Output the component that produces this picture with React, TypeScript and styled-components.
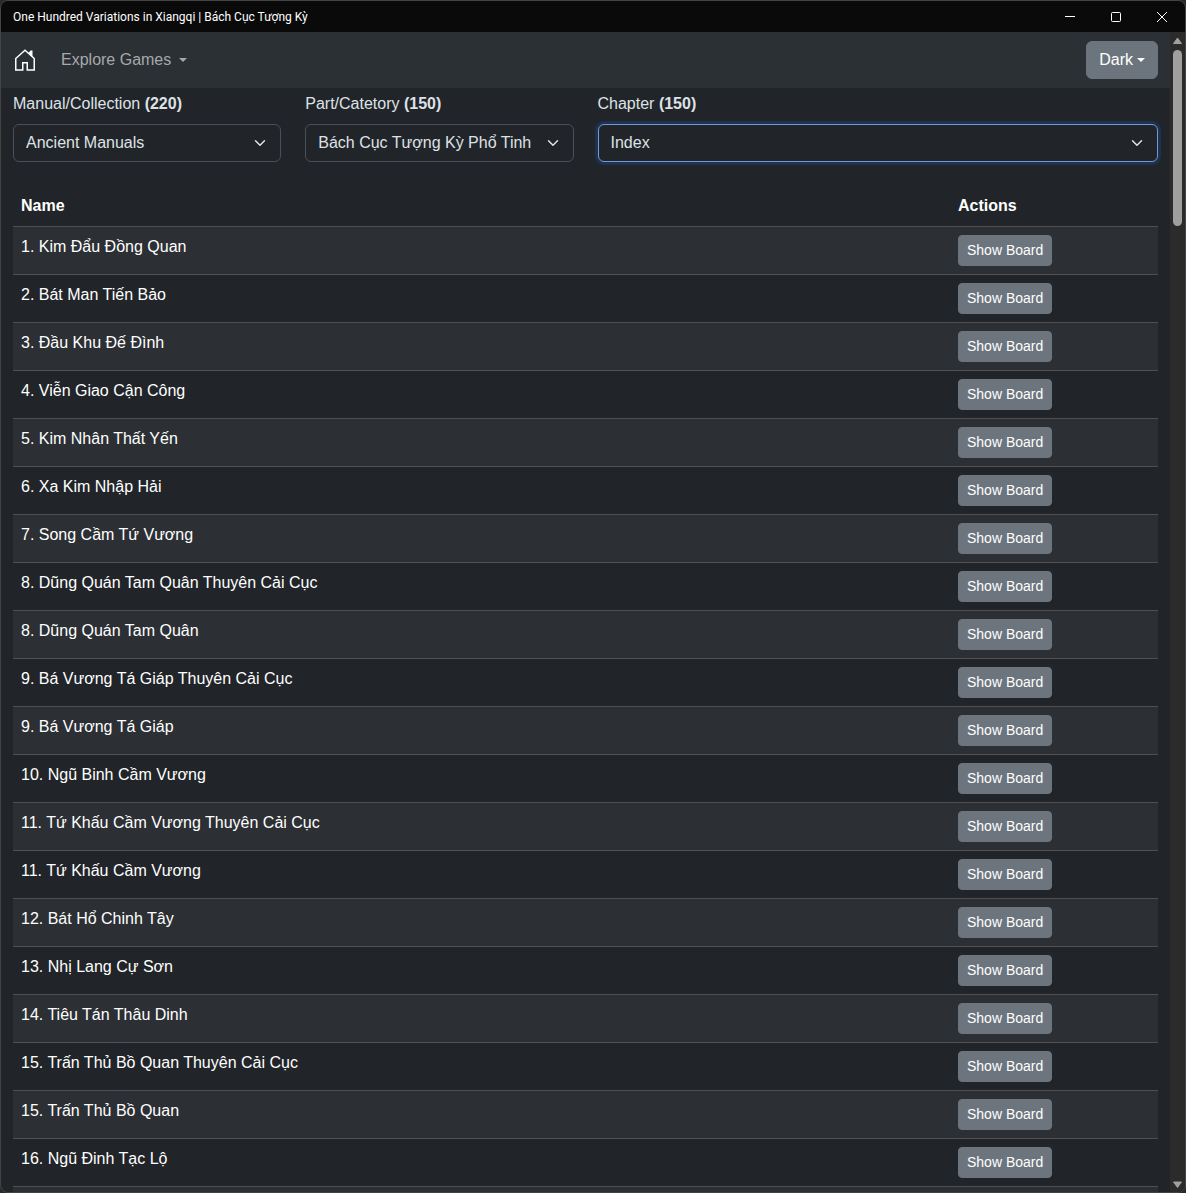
import React from "react";
import styled, { createGlobalStyle } from "styled-components";

const GlobalStyle = createGlobalStyle`
  *, *::before, *::after { box-sizing: border-box; }
  body {
    margin: 0;
    background: #2a2a2a;
    color: #dee2e6;
    font: 400 16px/24px "Liberation Sans", Arial, sans-serif;
  }
  button, select { font-family: inherit; }
`;

const Window = styled.div`
  display: flex;
  flex-direction: column;
  height: 100vh;
  border: 1px solid #444;
  border-radius: 8px;
  overflow: hidden;
  background: #212529;
`;

const TitleBar = styled.header`
  display: flex;
  flex: none;
  align-items: center;
  justify-content: space-between;
  height: 31px;
  padding-left: 12px;
  background: #0a0a0a;
  color: #fff;
`;

const Title = styled.span`
  font: 400 12px/16px Roboto, "Noto Sans", sans-serif;
`;

const WindowControls = styled.div`
  display: flex;
`;

const WindowButton = styled.button`
  display: grid;
  place-items: center;
  width: 46px;
  height: 31px;
  padding: 0;
  border: 0;
  background: none;
  color: #fff;
`;

const Viewport = styled.div`
  display: flex;
  flex: 1;
  min-height: 0;
`;

const Page = styled.div`
  flex: 1;
  min-width: 0;
  overflow: hidden;
`;

const Navbar = styled.nav`
  display: flex;
  align-items: center;
  height: 56px;
  padding: 0 12px;
  background: #2b3035;
`;

const HomeLink = styled.a`
  display: flex;
  width: 24px;
  height: 24px;
  margin-right: 16px;
  color: #fff;
`;

const NavButton = styled.button`
  display: flex;
  align-items: center;
  gap: 8px;
  padding: 8px;
  border: 0;
  background: none;
  color: #a6a8aa;
  font-size: 16px;
  line-height: 24px;
`;

const ThemeButton = styled.button`
  display: flex;
  align-items: center;
  gap: 4px;
  margin-left: auto;
  padding: 6px 12px;
  border: 1px solid #6c757d;
  border-radius: 6px;
  background: #6c757d;
  color: #fff;
  font-size: 16px;
  line-height: 24px;
`;

const Caret = styled.span`
  border-top: 4px solid;
  border-left: 4px solid transparent;
  border-right: 4px solid transparent;
`;

const Content = styled.main`
  padding: 4px 12px 0;
`;

const Filters = styled.form`
  display: grid;
  grid-template-columns: repeat(4, minmax(0, 1fr));
  gap: 24px;
  margin-bottom: 24px;
`;

const Field = styled.div<{ $wide?: boolean }>`
  grid-column: span ${(p) => (p.$wide ? 2 : 1)};
`;

const Label = styled.label`
  display: block;
  margin-bottom: 8px;
`;

const SelectBox = styled.div`
  display: grid;
  align-items: center;
  > * { grid-area: 1 / 1; }
  > svg {
    justify-self: end;
    margin-right: 13px;
    pointer-events: none;
  }
`;

const Select = styled.select<{ $active?: boolean }>`
  appearance: none;
  width: 100%;
  height: 38px;
  padding: 6px 36px 6px 12px;
  border: 1px solid ${(p) => (p.$active ? "#7199d3" : "#495057")};
  border-radius: 6px;
  outline: 0;
  background: #212529;
  box-shadow: ${(p) => (p.$active ? "0 0 0 3px #1d3251" : "none")};
  color: #dee2e6;
  font-size: 16px;
  line-height: 24px;
`;

const Table = styled.table`
  width: 100%;
  border-collapse: separate;
  border-spacing: 0;
  color: #fff;
`;

const HeadCell = styled.th<{ $actions?: boolean }>`
  width: ${(p) => (p.$actions ? "208px" : "auto")};
  padding: 8px;
  border-bottom: 1px solid #4d5154;
  text-align: left;
`;

const Row = styled.tr`
  &:nth-child(odd) { background: #2c3034; }
`;

const Cell = styled.td`
  padding: 8px;
  border-bottom: 1px solid #4d5154;
  vertical-align: top;
`;

const ShowButton = styled.button`
  display: block;
  padding: 4px 8px;
  border: 1px solid #6c757d;
  border-radius: 4px;
  background: #6c757d;
  color: #fff;
  font-size: 14px;
  line-height: 21px;
`;

const Scrollbar = styled.div`
  display: flex;
  flex: none;
  flex-direction: column;
  align-items: center;
  width: 15px;
  padding: 5px 0 3px;
  background: #2b2b2b;
`;

const Thumb = styled.div`
  width: 9px;
  height: 176px;
  margin: 5px 0 auto;
  border-radius: 5px;
  background: #9f9f9f;
`;

const games = [
  "1. Kim Đẩu Đồng Quan",
  "2. Bát Man Tiến Bảo",
  "3. Đầu Khu Đế Đình",
  "4. Viễn Giao Cận Công",
  "5. Kim Nhân Thất Yến",
  "6. Xa Kim Nhập Hải",
  "7. Song Cầm Tứ Vương",
  "8. Dũng Quán Tam Quân Thuyên Cải Cục",
  "8. Dũng Quán Tam Quân",
  "9. Bá Vương Tá Giáp Thuyên Cải Cục",
  "9. Bá Vương Tá Giáp",
  "10. Ngũ Binh Cầm Vương",
  "11. Tứ Khấu Cầm Vương Thuyên Cải Cục",
  "11. Tứ Khấu Cầm Vương",
  "12. Bát Hổ Chinh Tây",
  "13. Nhị Lang Cự Sơn",
  "14. Tiêu Tán Thâu Dinh",
  "15. Trấn Thủ Bồ Quan Thuyên Cải Cục",
  "15. Trấn Thủ Bồ Quan",
  "16. Ngũ Đinh Tạc Lộ",
];

const filters = [
  { id: "manual", label: "Manual/Collection", count: 220, value: "Ancient Manuals" },
  { id: "part", label: "Part/Catetory", count: 150, value: "Bách Cục Tượng Kỳ Phổ Tinh" },
  { id: "chapter", label: "Chapter", count: 150, value: "Index", wide: true },
];

const Chevron = () => (
  <svg width="16" height="12" viewBox="0 0 16 16" fill="none" stroke="#dee2e6" strokeWidth="2" strokeLinecap="round" strokeLinejoin="round" aria-hidden="true">
    <path d="m2 5 6 6 6-6" />
  </svg>
);

const HomeIcon = () => (
  <svg width="24" height="24" viewBox="0 0 24 24" fill="none" stroke="currentColor" strokeWidth="1.5" aria-hidden="true">
    <path d="M2.75 22V10.5L12 2.25l9.25 8.25V22h-7v-7.25h-4.5V22z" />
    <path d="M15.5 5 17.5 2.5h2V9z" fill="currentColor" stroke="none" />
  </svg>
);

export default function App() {
  return (
    <>
      <GlobalStyle />
      <Window>
        <TitleBar>
          <Title>One Hundred Variations in Xiangqi | Bách Cục Tượng Kỳ</Title>
          <WindowControls>
            <WindowButton aria-label="Minimize">
              <svg width="10" height="10" stroke="currentColor"><path d="M0 4.5h10" /></svg>
            </WindowButton>
            <WindowButton aria-label="Maximize">
              <svg width="10" height="10" fill="none" stroke="currentColor"><rect x=".5" y=".5" width="9" height="9" rx="1" /></svg>
            </WindowButton>
            <WindowButton aria-label="Close">
              <svg width="10" height="10" stroke="currentColor"><path d="m0 0 10 10M10 0 0 10" /></svg>
            </WindowButton>
          </WindowControls>
        </TitleBar>
        <Viewport>
          <Page>
            <Navbar>
              <HomeLink href="#" aria-label="Home"><HomeIcon /></HomeLink>
              <NavButton>Explore Games <Caret /></NavButton>
              <ThemeButton>Dark <Caret /></ThemeButton>
            </Navbar>
            <Content>
              <Filters>
                {filters.map((f) => (
                  <Field key={f.id} $wide={f.wide}>
                    <Label htmlFor={f.id}>{f.label} <b>({f.count})</b></Label>
                    <SelectBox>
                      <Select id={f.id} $active={f.wide}>
                        <option>{f.value}</option>
                      </Select>
                      <Chevron />
                    </SelectBox>
                  </Field>
                ))}
              </Filters>
              <Table>
                <thead>
                  <tr>
                    <HeadCell>Name</HeadCell>
                    <HeadCell $actions>Actions</HeadCell>
                  </tr>
                </thead>
                <tbody>
                  {games.map((name) => (
                    <Row key={name}>
                      <Cell>{name}</Cell>
                      <Cell><ShowButton>Show Board</ShowButton></Cell>
                    </Row>
                  ))}
                  <Row>
                    <Cell />
                    <Cell />
                  </Row>
                </tbody>
              </Table>
            </Content>
          </Page>
          <Scrollbar aria-hidden="true">
            <svg width="9" height="8" fill="#9f9f9f" stroke="#9f9f9f" strokeLinejoin="round"><path d="M4.5 1 8.5 6.5h-8z" /></svg>
            <Thumb />
            <svg width="9" height="8" fill="#9f9f9f" stroke="#9f9f9f" strokeLinejoin="round"><path d="M4.5 6.5.5 1h8z" /></svg>
          </Scrollbar>
        </Viewport>
      </Window>
    </>
  );
}
